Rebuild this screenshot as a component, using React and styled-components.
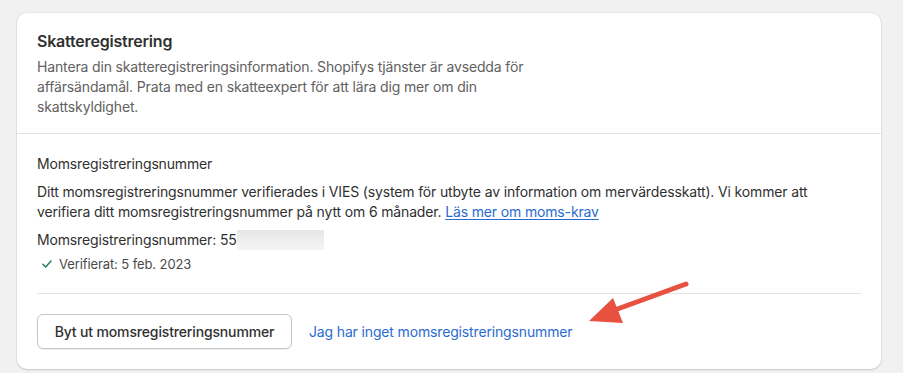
import React from "react";
import styled, { createGlobalStyle } from "styled-components";

const Global = createGlobalStyle`
  html, body { margin: 0; padding: 0; background: #f1f1f1; }
  body { font-family: Inter, "Noto Sans", sans-serif; color: #303030; -webkit-font-smoothing: antialiased; }
`;

const Page = styled.div`
  padding: 13px 22px 3px 17px;
  position: relative;
`;

const Card = styled.section`
  width: 864px;
  background: #ffffff;
  border-radius: 10px;
  box-shadow: 0 1px 2px rgba(0, 0, 0, 0.14), 0 0 0 1px rgba(0, 0, 0, 0.035);
  overflow: hidden;
`;

const Header = styled.header`
  padding: 18px 20px 16px;
  border-bottom: 1px solid #e3e3e3;
`;

const Title = styled.h2`
  margin: 0;
  font-size: 16px;
  line-height: 20px;
  font-weight: 600;
  color: #303030;
  letter-spacing: -0.2px;
`;

const Description = styled.p`
  margin: 6px 0 0;
  max-width: 500px;
  font-size: 14px;
  line-height: 20px;
  color: #616161;
  letter-spacing: -0.15px;
`;

const Section = styled.div`
  padding: 20px 20px 0;
  display: flex;
  flex-direction: column;
  gap: 8px;
`;

const Text = styled.p`
  margin: 0;
  font-size: 14px;
  line-height: 20px;
  color: #303030;
  letter-spacing: -0.15px;
`;

const Link = styled.a`
  color: #2a6bd1;
  text-decoration: underline;
  text-underline-offset: 2px;
  cursor: pointer;
`;

const Masked = styled.span`
  display: inline-block;
  vertical-align: top;
  width: 87px;
  height: 20px;
  background: linear-gradient(180deg, #e6e6e6 0%, #efefef 60%, #f3f3f3 100%);
`;

const Status = styled.div`
  display: flex;
  align-items: center;
  gap: 6px;
  padding-left: 4px;
  margin-top: -3px;
  font-size: 13px;
  line-height: 18px;
  color: #4a4a4a;
  letter-spacing: -0.1px;
`;

const Divider = styled.hr`
  margin: 20px 20px 0;
  border: 0;
  border-top: 1px solid #e3e3e3;
`;

const Footer = styled.div`
  padding: 20px;
  display: flex;
  align-items: center;
  gap: 17px;
`;

const Button = styled.button`
  height: 35px;
  width: 255px;
  padding: 0 16px;
  border: 1px solid #c4c4c4;
  border-radius: 6px;
  background: #ffffff;
  font-family: inherit;
  font-size: 14px;
  font-weight: 500;
  color: #303030;
  letter-spacing: -0.15px;
  box-shadow: 0 1px 0 rgba(0, 0, 0, 0.05);
  cursor: pointer;
`;

const PlainLink = styled.a`
  font-size: 14px;
  line-height: 20px;
  color: #2a6bd1;
  letter-spacing: -0.15px;
  cursor: pointer;
`;

const Annotation = styled.svg`
  position: absolute;
  left: 0;
  top: 0;
  pointer-events: none;
`;

export default function App() {
  return (
    <>
      <Global />
      <Page>
        <Card>
          <Header>
            <Title>Skatteregistrering</Title>
            <Description>
              Hantera din skatteregistreringsinformation. Shopifys tjänster är avsedda för
              affärsändamål. Prata med en skatteexpert för att lära dig mer om din
              skattskyldighet.
            </Description>
          </Header>
          <Section>
            <Text>Momsregistreringsnummer</Text>
            <Text>
              Ditt momsregistreringsnummer verifierades i VIES (system för utbyte av information om
              mervärdesskatt). Vi kommer att verifiera ditt momsregistreringsnummer på nytt om 6
              månader. <Link>Läs mer om moms-krav</Link>
            </Text>
            <Text>
              Momsregistreringsnummer: 55<Masked />
            </Text>
            <Status>
              <svg width="12" height="12" viewBox="0 0 12 12" fill="none">
                <path
                  d="M2 6.4 L4.7 9 L10 3"
                  stroke="#29845a"
                  strokeWidth="1.6"
                  strokeLinecap="round"
                  strokeLinejoin="round"
                />
              </svg>
              Verifierat: 5 feb. 2023
            </Status>
          </Section>
          <Divider />
          <Footer>
            <Button>Byt ut momsregistreringsnummer</Button>
            <PlainLink>Jag har inget momsregistreringsnummer</PlainLink>
          </Footer>
        </Card>
        <Annotation width="903" height="373" viewBox="0 0 903 373">
          <line x1="686" y1="284" x2="612" y2="311" stroke="#e8503f" strokeWidth="5" strokeLinecap="round" />
          <polygon points="589,321 613,298 623,323" fill="#e8503f" />
        </Annotation>
      </Page>
    </>
  );
}
